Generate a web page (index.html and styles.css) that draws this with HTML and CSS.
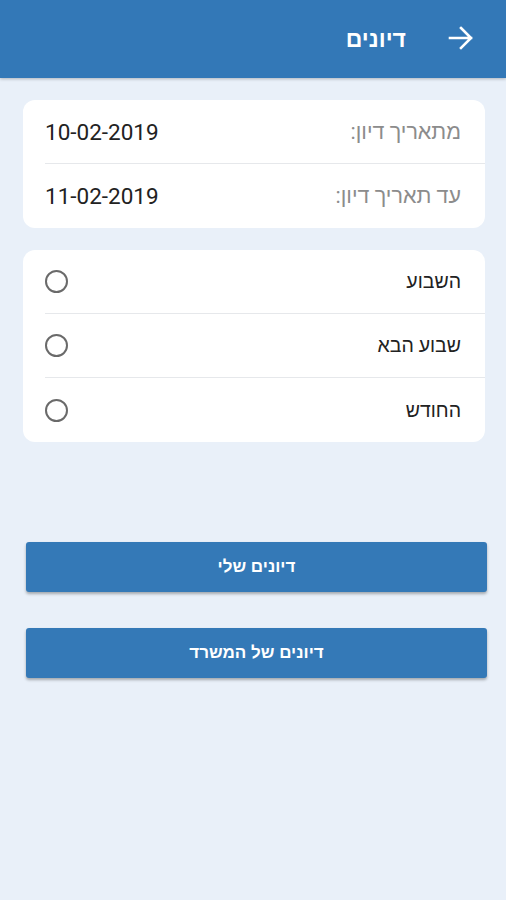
FILE: index.html
```html
<!DOCTYPE html>
<html lang="he" dir="rtl">
<head>
    <meta charset="UTF-8">
    <meta name="viewport" content="width=device-width, initial-scale=1.0">
    <title>דיונים</title>
    <link rel="stylesheet" href="styles.css">
</head>
<body>
    <header class="topbar">
        <span class="back">
            <svg width="26" height="24" viewBox="0 0 26 24">
                <path d="M2 12h21M13 2l10 10-10 10" fill="none" stroke="#fff" stroke-width="2.6" stroke-linecap="square"/>
            </svg>
        </span>
        <h1>דיונים</h1>
    </header>

    <div class="page">
        <!-- Date range -->
        <div class="card">
            <div class="row">
                <span class="label">מתאריך דיון:</span>
                <span class="date">10-02-2019</span>
            </div>
            <div class="row">
                <span class="label">עד תאריך דיון:</span>
                <span class="date">11-02-2019</span>
            </div>
        </div>

        <!-- Quick range -->
        <div class="card">
            <label class="row">
                <span class="option">השבוע</span>
                <span class="radio"></span>
            </label>
            <label class="row">
                <span class="option">שבוע הבא</span>
                <span class="radio"></span>
            </label>
            <label class="row">
                <span class="option">החודש</span>
                <span class="radio"></span>
            </label>
        </div>

        <div class="actions">
            <button type="button">דיונים שלי</button>
            <button type="button">דיונים של המשרד</button>
        </div>
    </div>
</body>
</html>
```

FILE: styles.css
```css
body {
    margin: 0;
    background: #e9f0f9;
    font-family: Roboto, "Liberation Sans", sans-serif;
    height: 900px;
}
.topbar {
    height: 78px;
    background: #3378b7;
    display: flex;
    align-items: center;
    padding-right: 32px;
    box-shadow: 0 1px 3px rgba(0, 0, 0, 0.25);
}
.back {
    display: flex;
    width: 26px;
    height: 24px;
    margin-top: -2px;
}
.topbar h1 {
    margin: 0 42px 0 0;
    color: #fff;
    font-family: "Liberation Sans", sans-serif;
    font-size: 23px;
    font-weight: bold;
}
.page {
    padding-top: 22px;
}
.card {
    background: #fff;
    border-radius: 12px;
    margin: 0 21px 22px 23px;
}
.row {
    height: 64px;
    margin-left: 22px;
    padding-right: 24px;
    display: flex;
    align-items: center;
    justify-content: space-between;
    border-bottom: 1px solid #e6e8eb;
    box-sizing: border-box;
}
.row:last-child {
    border-bottom: none;
}
.label {
    color: #8c8c8c;
    font-size: 21.5px;
}
.date {
    color: #222;
    font-size: 22.5px;
}
.option {
    color: #222;
    font-size: 19.5px;
}
.radio {
    width: 19px;
    height: 19px;
    border: 2px solid #6a6a6a;
    border-radius: 50%;
}
.actions {
    display: flex;
    flex-direction: column;
    gap: 36px;
    margin: 100px 19px 0 26px;
}
button {
    height: 50px;
    background: #3479b7;
    color: #fff;
    border: none;
    border-radius: 3px;
    font-family: "Liberation Sans", sans-serif;
    font-size: 17px;
    font-weight: bold;
    box-shadow: 0 2px 3px rgba(0, 0, 0, 0.3);
}
```
